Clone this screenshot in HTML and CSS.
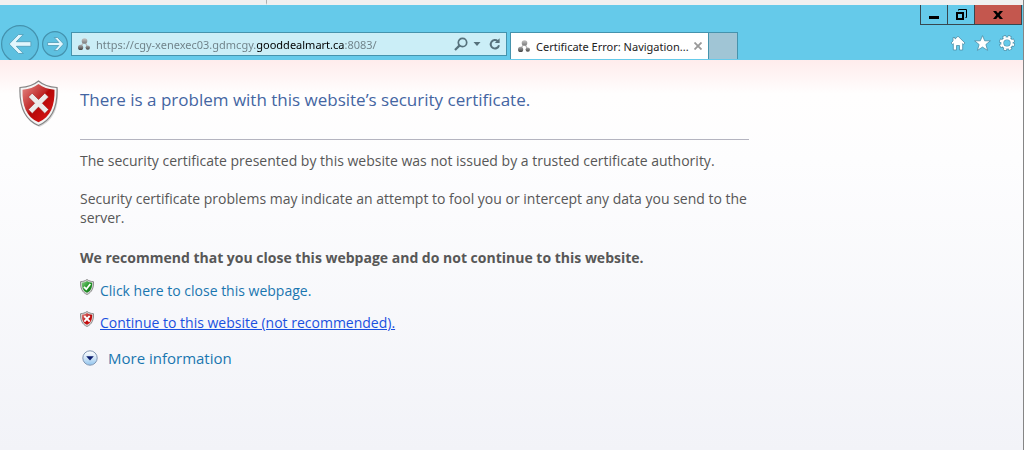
FILE: index.html
```
<!DOCTYPE html>
<html lang="en">
<head>
    <meta charset="UTF-8">
    <meta name="viewport" content="width=device-width, initial-scale=1.0">
    <title>Certificate Error: Navigation Blocked</title>
    <link rel="stylesheet" href="styles.css">
</head>
<body>
    <!-- Shared icon shapes -->
    <svg class="defs" width="0" height="0" aria-hidden="true">
        <defs>
            <linearGradient id="red" x1="0" y1="0" x2="1" y2="1">
                <stop offset="0" stop-color="#e58a86"/>
                <stop offset="0.45" stop-color="#bf2626"/>
                <stop offset="0.5" stop-color="#b40808"/>
                <stop offset="0.8" stop-color="#d01212"/>
                <stop offset="1" stop-color="#8c0808"/>
            </linearGradient>
            <linearGradient id="green" x1="0" y1="0" x2="1" y2="1">
                <stop offset="0" stop-color="#8fd08a"/>
                <stop offset="0.5" stop-color="#25982a"/>
                <stop offset="1" stop-color="#0c6f12"/>
            </linearGradient>
            <linearGradient id="ball" x1="0" y1="0" x2="0" y2="1">
                <stop offset="0" stop-color="#a8a8a8"/>
                <stop offset="1" stop-color="#444"/>
            </linearGradient>
            <linearGradient id="ball-light" x1="0" y1="0" x2="0" y2="1">
                <stop offset="0" stop-color="#c4c4c4"/>
                <stop offset="1" stop-color="#777"/>
            </linearGradient>
            <linearGradient id="blue" x1="0" y1="0" x2="0" y2="1">
                <stop offset="0" stop-color="#ffffff"/>
                <stop offset="0.5" stop-color="#d3e6f7"/>
                <stop offset="1" stop-color="#8fc4ee"/>
            </linearGradient>
            <symbol id="site" viewBox="0 0 14 14">
                <path d="M7 5 4 9M8 5l2 4" stroke="#b5b5b5" stroke-width="1.2" fill="none"/>
                <circle cx="7.5" cy="4" r="2.8" fill="url(#ball-light)"/>
                <circle cx="3.6" cy="10.4" r="2.6" fill="url(#ball)"/>
                <circle cx="10.8" cy="10.6" r="2.2" fill="url(#ball)"/>
            </symbol>
        </defs>
    </svg>

    <div class="window">
        <div class="top-strip"></div>

        <header class="browser-bar">
            <nav class="nav-buttons">
                <button aria-label="Back">
                    <svg width="38" height="38" viewBox="0 0 38 38">
                        <circle cx="19" cy="19" r="18.4" fill="#5dc0e0" stroke="#4492ae" stroke-width="1.2"/>
                        <path d="M17.5 9.500h4.800l-7 7.200h14.600v4.600H15.300l7 7.200h-4.800L8.200 19z" fill="#e2f6fd" stroke="#4d9bb6" stroke-width="0.8"/>
                    </svg>
                </button>
                <button aria-label="Forward">
                    <svg width="26" height="26" viewBox="0 0 26 26">
                        <circle cx="13" cy="13" r="12.4" fill="#5dc0e0" stroke="#4492ae" stroke-width="1.2"/>
                        <path d="M12.2 6.500h3.400l6 6.500-6 6.500h-3.400l4.600-5H5.600v-3h11.200z" fill="#e2f6fd" stroke="#4d9bb6" stroke-width="0.8"/>
                    </svg>
                </button>
            </nav>

            <form class="address-bar">
                <svg width="14" height="14"><use href="#site"/></svg>
                <input class="address" type="text" aria-label="Address" value="https://cgy-xenexec03.gdmcgy.gooddealmart.ca:8083/" spellcheck="false">
                <button class="tool-btn" type="button" aria-label="Search">
                    <svg width="14" height="14" viewBox="0 0 14 14" fill="none" stroke="#56717c">
                        <circle cx="8.5" cy="5.5" r="4.2" stroke-width="1.7"/>
                        <path d="M5.4 8.6 1 13" stroke-width="2.2"/>
                    </svg>
                </button>
                <button class="tool-btn" type="button" aria-label="Show address list">
                    <svg width="8" height="4" viewBox="0 0 8 4"><path d="M0.5 0h7L4 4z" fill="#56717c"/></svg>
                </button>
                <button class="tool-btn refresh" type="button" aria-label="Refresh">
                    <svg width="12" height="14" viewBox="0 0 12 14">
                        <path d="M8.8 4.200A4.200 4.200 0 1 0 10 8.200" fill="none" stroke="#56717c" stroke-width="2"/>
                        <path d="M10.6 1.200v4.800H5.800z" fill="#56717c"/>
                    </svg>
                </button>
            </form>

            <div class="tabs">
                <div class="tab">
                    <svg width="14" height="14"><use href="#site"/></svg>
                    <span class="tab-title">Certificate Error: Navigation...</span>
                    <button aria-label="Close tab">
                        <svg width="8" height="8" viewBox="0 0 8 8"><path d="M0.5 0.5l7 7M7.5 0.5l-7 7" stroke="#999" stroke-width="1.8"/></svg>
                    </button>
                </div>
                <button class="new-tab" aria-label="New tab"></button>
            </div>

            <div class="bar-right">
                <div class="window-buttons">
                    <button class="win-btn" aria-label="Minimize">
                        <svg width="10" height="10" viewBox="0 0 10 10"><path d="M0 6h10v3H0z"/></svg>
                    </button>
                    <button class="win-btn" aria-label="Restore">
                        <svg width="11" height="11" viewBox="0 0 11 11" fill="none" stroke="#000">
                            <path d="M1 4h6v6H1z" stroke-width="2"/>
                            <path d="M2.5 1.5V.5h8v8h-1" stroke-width="1"/>
                        </svg>
                    </button>
                    <button class="win-btn win-close" aria-label="Close">
                        <svg width="10" height="8" viewBox="0 0 10 8"><path d="M0 0h3.2L5 2.3 6.8 0H10L6.7 4 10 8H6.8L5 5.7 3.2 8H0l3.3-4z"/></svg>
                    </button>
                </div>
                <div class="tools">
                    <button aria-label="Home">
                        <svg width="16" height="16" viewBox="0 0 16 16">
                            <path d="M8 1.2 15 8l-1.5 1.3-.8-.7V15H9.500v-4.500h-3V15H3.300V8.600l-.8.7L1 8l2-2V2.500h2v1.600z" fill="#fff" stroke="#4c8ea6" stroke-width="0.8"/>
                        </svg>
                    </button>
                    <button aria-label="Favorites">
                        <svg width="17" height="16" viewBox="0 0 17 16">
                            <path d="M8.5.6l2.2 5.200h5.700l-4.500 3.700 1.700 5.900-5.100-3.300-5.100 3.300 1.700-5.900L.6 5.800h5.700z" fill="#fff" stroke="#4c8ea6" stroke-width="0.8"/>
                        </svg>
                    </button>
                    <button aria-label="Tools">
                        <svg width="16" height="16" viewBox="0 0 16 16" fill="none">
                            <circle cx="8" cy="8" r="6.4" stroke="#4c8ea6" stroke-width="3.2" stroke-dasharray="3.4 1.627"/>
                            <circle cx="8" cy="8" r="4.8" stroke="#4c8ea6" stroke-width="3.6"/>
                            <circle cx="8" cy="8" r="6.3" stroke="#fff" stroke-width="2" stroke-dasharray="2.4 2.548" stroke-dashoffset="-0.5"/>
                            <circle cx="8" cy="8" r="4.7" stroke="#fff" stroke-width="2.2"/>
                        </svg>
                    </button>
                </div>
            </div>
        </header>

        <main class="page">
            <svg width="40" height="48" viewBox="0 0 40 48">
                <path d="M20.5 2.500C25 6.500 31 8 39 8.500c1 19-4 32-18.500 38.500C6 41 1 28 2 8.500 10 8 16 6.500 20.500 2.500z" fill="#000" opacity="0.15"/>
                <path d="M19.5 1C24 5 30 7 38 7.500c.8 18.500-4 32-18.500 38C5 39.500.2 26 1 7.500 9 7 15 5 19.500 1z" fill="#f4f4f4" stroke="#858585" stroke-width="1.2"/>
                <path d="M19.5 4C24 7.500 29 9.200 35.500 9.700c.4 16-3.800 27-16 32.600C7.300 36.700 3.100 25.700 3.500 9.700 10 9.200 15 7.500 19.500 4z" fill="url(#red)"/>
                <path d="M13.2 13.200l6.300 6.300 6.300-6.300 3.800 3.800-6.300 6.300 6.300 6.300-3.800 3.800-6.300-6.300-6.300 6.300-3.800-3.800 6.300-6.300L9.400 17z" fill="#ececec" stroke="#991414" stroke-width="0.5"/>
            </svg>

            <div class="content">
                <h1>There is a problem with this website’s security certificate.</h1>
                <hr>
                <p>The security certificate presented by this website was not issued by a trusted certificate authority.</p>
                <p>Security certificate problems may indicate an attempt to fool you or intercept any data you send to the server.</p>
                <p class="recommend">We recommend that you close this webpage and do not continue to this website.</p>

                <div class="option">
                    <svg width="14" height="16" viewBox="0 0 14 16">
                        <path d="M7 .5C9 2 11 2.500 13.500 2.700c.2 6.300-1.500 10.500-6.500 12.800C2 13.200.3 9 .5 2.700 3 2.500 5 2 7 .5z" fill="#d8d8d8" stroke="#8c8c8c"/>
                        <path d="M7 2c1.500 1 3.200 1.500 5.200 1.700 0 5-1.400 8.200-5.200 10.100-3.800-1.900-5.200-5.100-5.200-10.100C3.800 3.500 5.500 3 7 2z" fill="url(#green)"/>
                        <path d="M4 7.800l2.300 2.400L10.300 5" fill="none" stroke="#fff" stroke-width="1.8"/>
                    </svg>
                    <a href="#">Click here to close this webpage.</a>
                </div>
                <div class="option">
                    <svg width="14" height="16" viewBox="0 0 14 16">
                        <path d="M7 .5C9 2 11 2.500 13.500 2.700c.2 6.300-1.500 10.500-6.500 12.800C2 13.200.3 9 .5 2.700 3 2.500 5 2 7 .5z" fill="#d8d8d8" stroke="#8c8c8c"/>
                        <path d="M7 2c1.500 1 3.200 1.500 5.200 1.700 0 5-1.400 8.200-5.200 10.100-3.800-1.900-5.200-5.100-5.200-10.100C3.800 3.500 5.500 3 7 2z" fill="url(#red)"/>
                        <path d="M4.300 5l5.400 5.600M9.700 5l-5.400 5.600" stroke="#fff" stroke-width="1.9"/>
                    </svg>
                    <a class="active" href="#">Continue to this website (not recommended).</a>
                </div>
                <button class="more">
                    <svg width="16" height="16" viewBox="0 0 16 16">
                        <circle cx="8" cy="8" r="7.2" fill="url(#blue)" stroke="#8398b4"/>
                        <path d="M4.200 6.200h7.600L8 10.400z" fill="#0b1d70"/>
                    </svg>
                    More information
                </button>
            </div>
        </main>
    </div>
</body>
</html>
```
FILE: styles.css
```
* {
    box-sizing: border-box;
}
body {
    margin: 0;
    font-family: "Open Sans", "Noto Sans", sans-serif;
    color: #575757;
}
button {
    padding: 0;
    border: none;
    background: none;
    font-family: inherit;
    cursor: pointer;
}
svg {
    display: block;
    flex-shrink: 0;
}
.defs {
    position: absolute;
}
.window {
    display: flex;
    flex-direction: column;
    min-height: 100vh;
    border-right: 1px solid #858585;
    background: #f0f0f0;
}
.top-strip {
    width: 267px;
    height: 5px;
    border-right: 1px solid #b0b0b0;
    border-bottom: 2px solid #f0f0f0;
}

/* Browser bar */
.browser-bar {
    display: flex;
    align-items: flex-end;
    height: 55px;
    padding-left: 1px;
    background: #65caea;
    overflow: hidden;
}
.nav-buttons {
    display: flex;
    align-items: center;
    gap: 3px;
    width: 70px;
    height: 33px;
}
.address-bar {
    display: flex;
    align-items: center;
    flex: 0 1 436px;
    height: 24px;
    margin-bottom: 4px;
    padding: 0 5px;
    border: 1px solid #4593ad;
    background: #cbeef7;
}
.address {
    flex: 1;
    min-width: 0;
    height: 20px;
    margin-left: 5px;
    padding: 0;
    border: none;
    outline: none;
    font-family: "Noto Sans", sans-serif;
    font-size: 11px;
    /* only the domain is drawn in black */
    background: linear-gradient(to right, #6d7f86 160px, #000 160px, #000 248px, #6d7f86 248px);
    -webkit-background-clip: text;
    background-clip: text;
    -webkit-text-fill-color: transparent;
}
.tool-btn {
    margin-left: 5px;
}
.refresh {
    margin-left: 8px;
}
.tabs {
    display: flex;
    height: 27px;
    margin-bottom: 1px;
    margin-left: 3px;
}
.tab {
    display: flex;
    align-items: center;
    width: 199px;
    padding: 0 6px;
    border: 1px solid #4593ad;
    border-bottom: none;
    background: #fff;
}
.tab-title {
    flex: 1;
    margin-left: 5px;
    font-family: "Noto Sans", sans-serif;
    font-size: 11px;
    color: #222;
    white-space: nowrap;
}
.new-tab {
    width: 29px;
    border: 1px solid #4593ad;
    border-width: 1px 1px 0 0;
    background: #a0c5d5;
}
.bar-right {
    display: flex;
    flex-direction: column;
    align-items: flex-end;
    align-self: flex-start;
    gap: 10px;
    margin-left: auto;
    padding-right: 1px;
}
.window-buttons {
    display: flex;
    height: 20px;
    border: 1px solid #37474f;
    border-top: none;
}
.win-btn {
    display: flex;
    align-items: center;
    justify-content: center;
    width: 27px;
    border-right: 1px solid #37474f;
}
.win-close {
    width: 46px;
    border-right: none;
    background: #c4574e;
}
.tools {
    display: flex;
    gap: 8px;
    padding-right: 7px;
}

/* Error page */
.page {
    display: flex;
    flex: 1;
    padding: 20px 20px 20px 19px;
    background: linear-gradient(to bottom, #ffecec 0, #fffefe 34px, #fdfdfe 100px, #f2f3f8 100%);
}
.content {
    flex: 0 1 669px;
    margin-left: 21px;
    font-size: 14px;
    line-height: 19px;
}
h1 {
    margin: 8px 0 27px;
    font-size: 17px;
    font-weight: 400;
    line-height: 24px;
    color: #4465a2;
}
hr {
    height: 1px;
    margin: 0 0 11px;
    border: none;
    background: #b4b4c0;
}
p {
    margin: 0 0 19px;
}
.recommend {
    margin: 21px 0 12px;
    font-weight: 700;
}
.option {
    display: flex;
    gap: 6px;
    margin-bottom: 11px;
}
a {
    margin-top: 2px;
    color: #1a76b0;
    text-decoration: none;
}
.active {
    color: #1a50e0;
    text-decoration: underline;
}
.more {
    display: flex;
    align-items: center;
    gap: 10px;
    margin-top: 12px;
    padding: 2px;
    font-size: 15px;
    line-height: 24px;
    color: #1a76b0;
}
```
